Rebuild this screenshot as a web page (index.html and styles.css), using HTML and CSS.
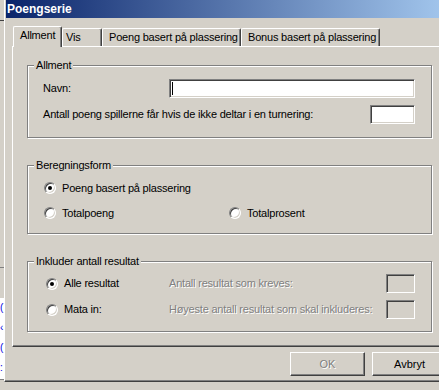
FILE: index.html
```html
<!DOCTYPE html>
<html lang="no">
<head>
  <meta charset="UTF-8" />
  <title>Poengserie</title>
  <link rel="stylesheet" href="styles.css">
</head>
<body>
  <div class="screen">
    <div class="behind">
      <div class="bh-top"></div>
      <div class="bh-mid"></div>
      <div class="bh-gap"></div>
      <div class="bh-list">
        <div>(</div>
        <div>‹</div>
        <div>(</div>
        <div>:</div>
      </div>
    </div>

    <div class="dialog">
      <div class="titlebar">
        <span class="title">Poengserie</span>
        <span class="tb-btn"></span>
      </div>

      <div class="content">
        <div class="tabs">
          <div class="tab active">Allment</div>
          <div class="tab tab-vis">Vis</div>
          <div class="tab">Poeng basert på plassering</div>
          <div class="tab">Bonus basert på plassering</div>
        </div>

        <div class="panel">
          <fieldset class="group g-allment">
            <legend>Allment</legend>
            <div class="row">
              <span>Navn:</span>
              <div class="edit edit-name"><span class="caret"></span></div>
            </div>
            <div class="row">
              <span>Antall poeng spillerne får hvis de ikke deltar i en turnering:</span>
              <div class="edit edit-small"></div>
            </div>
          </fieldset>

          <fieldset class="group g-calc">
            <legend>Beregningsform</legend>
            <div class="radio-row">
              <label class="opt"><span class="radio checked"></span>Poeng basert på plassering</label>
            </div>
            <div class="radio-row two-col">
              <label class="opt"><span class="radio"></span>Totalpoeng</label>
              <label class="opt"><span class="radio"></span>Totalprosent</label>
            </div>
          </fieldset>

          <fieldset class="group g-include">
            <legend>Inkluder antall resultat</legend>
            <div class="include-grid">
              <label class="opt"><span class="radio checked"></span>Alle resultat</label>
              <span class="disabled">Antall resultat som kreves:</span>
              <div class="edit edit-off"></div>
              <label class="opt"><span class="radio"></span>Mata in:</label>
              <span class="disabled">Høyeste antall resultat som skal inkluderes:</span>
              <div class="edit edit-off"></div>
            </div>
          </fieldset>
        </div>

        <div class="buttons">
          <button class="btn" disabled>OK</button>
          <button class="btn">Avbryt</button>
        </div>
      </div>
    </div>
  </div>
</body>
</html>
```

FILE: styles.css
```css
* { box-sizing: border-box; }
body {
  margin: 0;
  background: #d4d0c8;
  font-family: "Liberation Sans", Arial, sans-serif;
  font-size: 11px;
  line-height: 13px;
  letter-spacing: -0.2px;
  color: #000;
  overflow: hidden;
}
.screen {
  display: flex;
  width: 470px;
  height: 390px;
}

/* the window behind, on the left edge */
.behind { width: 4px; flex: none; }
.bh-top { height: 21px; border-bottom: 1px solid #404040; }
.bh-mid { height: 247px; border-bottom: 1px solid #808080; }
.bh-gap { height: 30px; }
.bh-list {
  height: 82px;
  background: #fff;
  color: #0000e0;
  overflow: hidden;
  border-bottom: 1px solid #808080;
}
.bh-list div {
  line-height: 20px;
  font-size: 10px;
  letter-spacing: 0;
}

/* dialog */
.dialog {
  width: 452px;
  flex: none;
  height: 382px;
  border-left: 1px solid #fff;
  border-bottom: 1px solid #404040;
  padding-left: 1px;
  box-shadow: inset 0 -1px #808080;
}
.titlebar {
  height: 18px;
  background: linear-gradient(to right, #0a246a, #a6caf0);
  color: #fff;
  display: flex;
  align-items: center;
  justify-content: space-between;
  padding-left: 1px;
}
.title { font-weight: bold; font-size: 12px; letter-spacing: 0; }
.tb-btn {
  width: 16px;
  height: 14px;
  margin-right: 1px;
  background: #d4d0c8;
  border: 1px solid;
  border-color: #fff #404040 #404040 #fff;
  box-shadow: inset -1px -1px #808080;
}
.content { padding: 0 8px 0 6px; }

/* tabs */
.tabs {
  display: flex;
  align-items: flex-end;
  height: 20px;
  margin-top: 8px;
  padding-left: 1px;
}
.tab {
  height: 18px;
  padding: 2px 6px 0 6px;
  border: 1px solid #fff;
  border-bottom: none;
  border-right-color: #404040;
  border-radius: 2px 2px 0 0;
  box-shadow: inset -1px 0 #808080;
  white-space: nowrap;
  background: #d4d0c8;
}
.tab.active {
  height: 21px;
  width: 49px;
  margin-bottom: -1px;
  padding-top: 2px;
  position: relative;
  z-index: 1;
}
.tab-vis { width: 40px; padding-left: 3px; }
.tab:nth-child(3), .tab:nth-child(4) { width: 139px; }

/* tab page */
.panel {
  border: 1px solid #404040;
  border-top-color: #fff;
  border-left-color: #fff;
  box-shadow: inset -1px -1px #808080;
  padding: 12px 15px 14px 14px;
}
.group {
  margin: 0;
  border: 1px solid #808080;
  box-shadow: inset 1px 1px #fff, 1px 1px #fff;
  padding: 7px 16px 13px 6px;
  min-width: 0;
}
.group legend {
  padding: 0 2px;
  background: #d4d0c8;
  line-height: 13px;
}
.g-calc, .g-include { margin-top: 21px; }

.row {
  display: flex;
  justify-content: space-between;
  align-items: center;
  height: 19px;
  padding-left: 9px;
}
.row + .row { margin-top: 7px; }

.edit {
  height: 19px;
  background: #fff;
  border: 1px solid;
  border-color: #808080 #fff #fff #808080;
  box-shadow: inset 1px 1px #404040, inset -1px -1px #d4d0c8;
  position: relative;
}
.edit-name { width: 246px; }
.edit-small { width: 45px; }
.edit-off { background: #d4d0c8; width: 29px; }
.caret {
  position: absolute;
  left: 2px;
  top: 2px;
  width: 1px;
  height: 13px;
  background: #000;
}

/* radios */
.g-calc { padding: 8px 16px 12px 6px; }
.radio-row {
  height: 16px;
  display: flex;
  align-items: center;
  padding-left: 10px;
}
.radio-row + .radio-row { margin-top: 9px; }
.two-col { display: grid; grid-template-columns: 185px 1fr; }
.opt { display: flex; align-items: center; white-space: nowrap; }
.radio {
  width: 12px;
  height: 12px;
  flex: none;
  border-radius: 50%;
  background: #fff;
  border: 1px solid;
  border-color: #808080 #fff #fff #808080;
  box-shadow: inset 1px 1px #404040, inset -1px -1px #d4d0c8;
  margin-right: 6px;
  position: relative;
}
.radio.checked::after {
  content: "";
  position: absolute;
  left: 3px;
  top: 3px;
  width: 4px;
  height: 4px;
  border-radius: 50%;
  background: #000;
}

.g-include { padding: 6px 16px 12px 6px; }
.include-grid {
  display: grid;
  grid-template-columns: 123px 1fr 29px;
  grid-auto-rows: 19px;
  row-gap: 7px;
  align-items: center;
  padding-left: 12px;
}
.disabled { color: #808080; text-shadow: 1px 1px #fff; white-space: nowrap; }

/* buttons */
.buttons {
  display: flex;
  justify-content: flex-end;
  gap: 7px;
  margin-top: 5px;
  padding-right: 1px;
}
.btn {
  width: 75px;
  height: 24px;
  font: inherit;
  color: #000;
  background: #d4d0c8;
  border: 1px solid;
  border-color: #fff #404040 #404040 #fff;
  box-shadow: inset -1px -1px #808080;
  padding: 0;
}
.btn:disabled { color: #808080; text-shadow: 1px 1px #fff; }
```
